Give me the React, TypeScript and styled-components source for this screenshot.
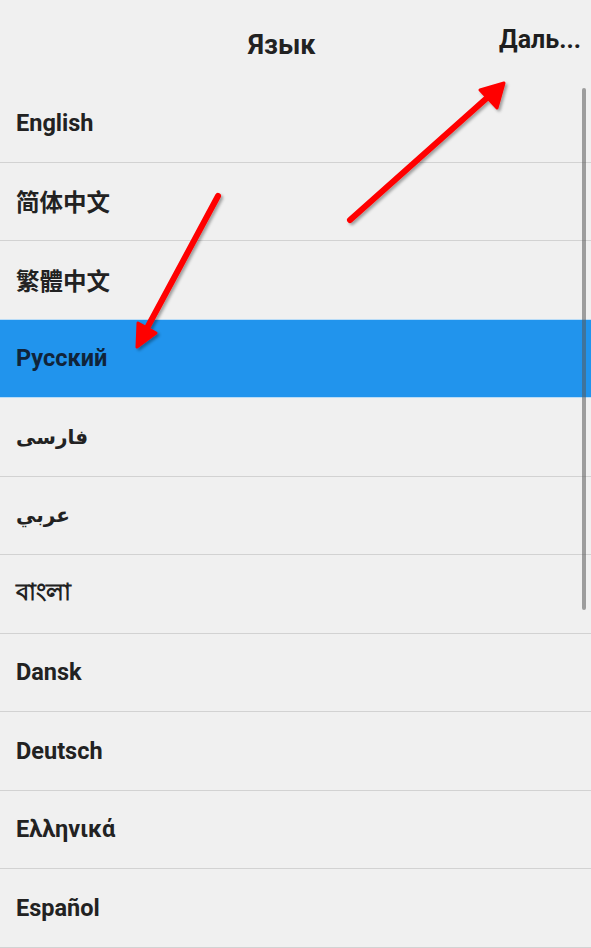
import React from 'react'
import styled, { createGlobalStyle } from 'styled-components'

const languages = [
  { name: 'English' },
  { name: '简体中文' },
  { name: '繁體中文' },
  { name: 'Русский' },
  { name: 'فارسی', rtl: true },
  { name: 'عربي', rtl: true },
  { name: 'বাংলা' },
  { name: 'Dansk' },
  { name: 'Deutsch' },
  { name: 'Ελληνικά' },
  { name: 'Español' },
]

const selected = 'Русский'

const GlobalStyle = createGlobalStyle`
  html, body {
    margin: 0;
    padding: 0;
    background: #f0f0f0;
    overflow: hidden;
  }
  body {
    font-family: Roboto, "Noto Sans", "Noto Sans CJK SC", "DejaVu Sans", sans-serif;
    color: #212121;
  }
`

const App = () => {
  return (
    <Screen>
      <GlobalStyle />
      <Header>
        <Title>Язык</Title>
        <NextButton>Даль...</NextButton>
      </Header>
      <List>
        {languages.map((lang) => (
          <Row key={lang.name} active={lang.name === selected}>
            <Label active={lang.name === selected} arabic={lang.rtl}>{lang.name}</Label>
          </Row>
        ))}
      </List>
      <ScrollThumb />
      {/* red annotation arrows drawn on top of the screenshot */}
      <Arrows width="591" height="948" viewBox="0 0 591 948">
        <defs>
          <filter id="shadow" x="-20%" y="-20%" width="140%" height="140%">
            <feDropShadow dx="2" dy="2" stdDeviation="1.5" floodColor="#000" floodOpacity="0.35" />
          </filter>
        </defs>
        <g filter="url(#shadow)" fill="#ff0000" stroke="#ff0000" strokeLinecap="round" strokeLinejoin="round">
          <line x1="350" y1="220" x2="488" y2="97" strokeWidth="6" />
          <polygon points="504,83 480,90 497,108" strokeWidth="3" />
          <line x1="218" y1="196" x2="146" y2="330" strokeWidth="6" />
          <polygon points="137,347 138,323 156,333" strokeWidth="3" />
        </g>
      </Arrows>
    </Screen>
  )
}

const Screen = styled.div`
  position: relative;
  width: 591px;
  height: 948px;
  overflow: hidden;
  background: #f0f0f0;
`

const Header = styled.div`
  height: 84px;
  display: flex;
  align-items: flex-start;
  justify-content: space-between;
  padding: 0 10px 0 248px;
  box-sizing: border-box;
`

const Title = styled.div`
  padding-top: 29px;
  font-size: 27px;
  font-weight: 700;
  color: #222;
`

const NextButton = styled.div`
  padding-top: 25px;
  font-size: 25px;
  font-weight: 700;
  color: #1e1e1e;
`

const List = styled.div`
  display: flex;
  flex-direction: column;
`

const Row = styled.div<{ active?: boolean }>`
  height: 78.5px;
  box-sizing: border-box;
  display: flex;
  align-items: center;
  padding: 0 16px;
  background: ${(p) => (p.active ? '#2194ed' : 'transparent')};
  border-bottom: 1px solid ${(p) => (p.active ? '#b9dcf7' : '#d2d2d2')};
  box-shadow: ${(p) => (p.active ? '0 -1px 0 #b9dcf7' : 'none')};
`

const Label = styled.span<{ active?: boolean; arabic?: boolean }>`
  font-size: ${(p) => (p.arabic ? '20px' : '23.5px')};
  font-weight: ${(p) => (p.arabic ? 600 : 700)};
  color: ${(p) => (p.active ? '#10243a' : '#222')};
`

const ScrollThumb = styled.div`
  position: absolute;
  top: 88px;
  right: 5px;
  width: 4px;
  height: 522px;
  border-radius: 2px;
  background: rgba(90, 90, 90, 0.55);
`

const Arrows = styled.svg`
  position: absolute;
  top: 0;
  left: 0;
  pointer-events: none;
`

export default App
